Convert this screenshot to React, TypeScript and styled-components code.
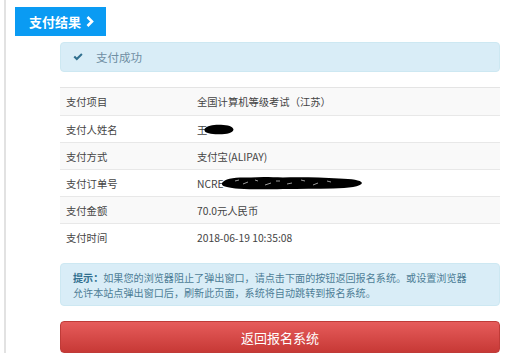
import React from "react";
import styled, { createGlobalStyle } from "styled-components";

const GlobalStyle = createGlobalStyle`
  html, body {
    margin: 0;
    padding: 0;
    background: #fff;
  }
  body {
    font-family: "Noto Sans CJK SC", "Liberation Sans", sans-serif;
    color: #555;
  }
`;

const Page = styled.div`
  margin-left: 4px;
  border-left: 2px solid #e2e2e2;
  height: 353px;
  padding-top: 7px;
  box-sizing: border-box;
`;

const TitleTag = styled.div`
  display: inline-flex;
  align-items: center;
  gap: 5px;
  margin-left: 9px;
  width: 91px;
  height: 29px;
  box-sizing: border-box;
  padding-left: 14px;
  background: #0a9bf3;
  color: #fff;
  font-size: 13px;
  font-weight: bold;
`;

const Content = styled.div`
  margin-left: 54px;
  width: 440px;
`;

const Alert = styled.div`
  margin-top: 6px;
  height: 30px;
  box-sizing: border-box;
  display: flex;
  align-items: center;
  gap: 13px;
  padding-left: 12px;
  background: #d9edf7;
  border: 1px solid #cde8f2;
  border-radius: 4px;
  color: #6f8ea3;
  font-size: 11.5px;
`;

const InfoTable = styled.div`
  margin-top: 15px;
  border-top: 1px solid #e4e4e4;
`;

const Row = styled.div<{ $striped?: boolean }>`
  display: grid;
  grid-template-columns: 131px 1fr;
  height: 27px;
  align-items: center;
  box-sizing: border-box;
  border-top: 1px solid #e8e8e8;
  background: ${(p) => (p.$striped ? "#f9f9f9" : "#fff")};
  font-size: 10.3px;
  color: #444;
  &:first-child {
    border-top: none;
  }
`;

const Cell = styled.div`
  padding-left: 6px;
  display: flex;
  align-items: center;
  white-space: nowrap;
`;

const Tip = styled.div`
  margin-top: 13px;
  height: 43px;
  box-sizing: border-box;
  padding: 6px 12px 0;
  background: #d9edf7;
  border: 1px solid #cde8f2;
  border-radius: 4px;
  color: #4d7d96;
  font-size: 10.1px;
  line-height: 15px;
  & b {
    color: #31708f;
  }
`;

const BackButton = styled.button`
  display: block;
  margin-top: 15px;
  width: 440px;
  height: 32px;
  border: 1px solid #bf3b38;
  border-radius: 4px;
  background: linear-gradient(#e65c5b, #c73936);
  color: #fff;
  font-family: "Noto Sans CJK SC", sans-serif;
  font-size: 13px;
  cursor: pointer;
`;

const Chevron = () => (
  <svg width="8" height="11" viewBox="0 0 8 11">
    <path d="M1.5 1 L6 5.5 L1.5 10" fill="none" stroke="#fff" strokeWidth="2.6" />
  </svg>
);

const CheckIcon = () => (
  <svg width="10" height="8" viewBox="0 0 10 8">
    <path d="M0.5 4.2 L2 2.8 L3.8 4.6 L8.2 0.3 L9.6 1.7 L3.8 7.4 Z" fill="#31708f" />
  </svg>
);

// redaction marks drawn over the personal data in the screenshot
const NameScribble = () => (
  <svg width="30" height="11" viewBox="0 0 30 11" style={{ marginLeft: -3 }}>
    <path
      d="M0.5 5 C3 1.5 10 0.5 17 0.8 C24 1 29 2.5 29.5 5.5 C29 9 22 10.5 14 10.3 C7 10 1 9.2 0.5 6.5 Z"
      fill="#000"
    />
  </svg>
);

const OrderScribble = () => (
  <svg width="142" height="14" viewBox="0 0 142 14" style={{ marginLeft: -3 }}>
    <path
      d="M1 7 C4 2 14 1 30 1.5 C40 0.5 50 1 62 1.5 C80 1 100 1.5 118 2.5 C131 3 140 4 141 7 C140 10.5 128 12 112 12.5 C95 13 80 12.8 62 13 C45 13.5 30 13.5 18 12.8 C8 12 1.5 10.5 1 8.5 Z"
      fill="#000"
    />
    <path
      d="M14 5 l4 -1 M22 8 l5 -2 M34 4 l3 1 M44 9 l6 -2 M55 5 l4 0 M66 8 l5 -1 M80 4 l4 1 M92 9 l5 -2 M106 5 l4 1"
      stroke="#9a9a9a"
      strokeWidth="1"
    />
  </svg>
);

const rows: { label: string; value: React.ReactNode }[] = [
  { label: "支付项目", value: "全国计算机等级考试（江苏）" },
  { label: "支付人姓名", value: <>王<NameScribble /></> },
  { label: "支付方式", value: "支付宝(ALIPAY)" },
  { label: "支付订单号", value: <>NCRE<OrderScribble /></> },
  { label: "支付金额", value: "70.0元人民币" },
  { label: "支付时间", value: "2018-06-19 10:35:08" },
];

const App = () => {
  return (
    <>
      <GlobalStyle />
      <Page>
        <TitleTag>
          支付结果 <Chevron />
        </TitleTag>
        <Content>
          <Alert>
            <CheckIcon />
            <span>支付成功</span>
          </Alert>

          <InfoTable>
            {rows.map((r, i) => (
              <Row key={r.label} $striped={i % 2 === 0}>
                <Cell>{r.label}</Cell>
                <Cell>{r.value}</Cell>
              </Row>
            ))}
          </InfoTable>

          <Tip>
            <b>提示：</b>如果您的浏览器阻止了弹出窗口，请点击下面的按钮返回报名系统。或设置浏览器
            <br />
            允许本站点弹出窗口后，刷新此页面，系统将自动跳转到报名系统。
          </Tip>

          <BackButton>返回报名系统</BackButton>
        </Content>
      </Page>
    </>
  );
};

export default App;
